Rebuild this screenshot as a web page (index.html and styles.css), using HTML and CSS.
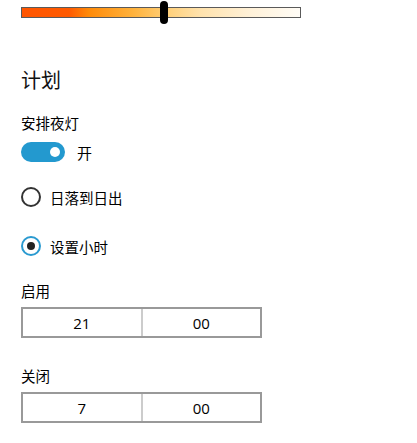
FILE: index.html
```html
<!DOCTYPE html>
<html lang="zh">
<head>
<meta charset="utf-8">
<link rel="stylesheet" href="styles.css">
</head>
<body>
<div class="page">
  <div class="slider">
    <div class="track"></div>
    <div class="thumb"></div>
  </div>
  <h2 class="title">计划</h2>
  <div class="label">安排夜灯</div>
  <div class="toggle-row">
    <span class="toggle"><span class="knob"></span></span>
    <span class="toggle-text">开</span>
  </div>
  <div class="radio-row first">
    <span class="radio"></span>
    <span class="radio-text">日落到日出</span>
  </div>
  <div class="radio-row second">
    <span class="radio checked"><span class="dot"></span></span>
    <span class="radio-text">设置小时</span>
  </div>
  <div class="label time-label">启用</div>
  <div class="timebox">
    <div class="cell">21</div>
    <div class="cell">00</div>
  </div>
  <div class="label time-label second-label">关闭</div>
  <div class="timebox">
    <div class="cell">7</div>
    <div class="cell">00</div>
  </div>
</div>
</body>
</html>
```
FILE: styles.css
```css
html, body {
  margin: 0;
  padding: 0;
  background: #ffffff;
}
body {
  font-family: "Noto Sans", "Noto Sans CJK SC", sans-serif;
  color: #000;
}
.page {
  padding-left: 21px;
}
.slider {
  position: relative;
  width: 280px;
  height: 25px;
}
.track {
  position: absolute;
  left: 0;
  top: 7px;
  width: 278px;
  height: 9px;
  border: 1px solid #5a5a5a;
  background: linear-gradient(to right, #ff5500 0%, #ff5a00 17%, #ff8a08 24%, #ffb23c 40%, #ffcf78 52%, #ffe2ac 64%, #fff1d8 82%, #fffcf6 100%);
}
.thumb {
  position: absolute;
  left: 139px;
  top: 1px;
  width: 8px;
  height: 23px;
  border-radius: 4px;
  background: #000;
}
.title {
  margin: 41px 0 0 0;
  font-size: 20px;
  line-height: 28px;
  font-weight: normal;
  font-family: "Noto Sans CJK SC", sans-serif;
  color: #111;
}
.label {
  margin-top: 19px;
  font-size: 14.5px;
  line-height: 20px;
  font-family: "Noto Sans CJK SC", sans-serif;
}
.toggle-row {
  margin-top: 9px;
  display: flex;
  align-items: center;
  height: 20px;
}
.toggle {
  width: 44px;
  height: 20px;
  border-radius: 10px;
  background: #2399cf;
  display: flex;
  align-items: center;
  justify-content: flex-end;
  padding-right: 5px;
  box-sizing: border-box;
}
.knob {
  width: 10px;
  height: 10px;
  border-radius: 50%;
  background: #fff;
}
.toggle-text {
  margin-left: 12px;
  font-size: 15px;
  font-family: "Noto Sans CJK SC", sans-serif;
}
.radio-row {
  display: flex;
  align-items: center;
  height: 20px;
}
.radio-row.first {
  margin-top: 25px;
}
.radio-row.second {
  margin-top: 29px;
}
.radio {
  width: 20px;
  height: 20px;
  box-sizing: border-box;
  border: 2px solid #333;
  border-radius: 50%;
  display: flex;
  align-items: center;
  justify-content: center;
}
.radio.checked {
  border-color: #2a9ad0;
}
.dot {
  width: 8px;
  height: 8px;
  border-radius: 50%;
  background: #222;
}
.radio-text {
  margin-left: 9px;
  font-size: 14.5px;
  font-family: "Noto Sans CJK SC", sans-serif;
}
.time-label {
  margin-top: 25px;
}
.second-label {
  margin-top: 28px;
}
.timebox {
  margin-top: 6px;
  width: 241px;
  height: 31px;
  box-sizing: border-box;
  border: 2px solid #999;
  display: flex;
}
.cell {
  flex: 1;
  display: flex;
  align-items: center;
  justify-content: center;
  font-size: 15px;
  font-family: "Open Sans", "Noto Sans", sans-serif;
}
.cell + .cell {
  border-left: 2px solid #cccccc;
}
```
